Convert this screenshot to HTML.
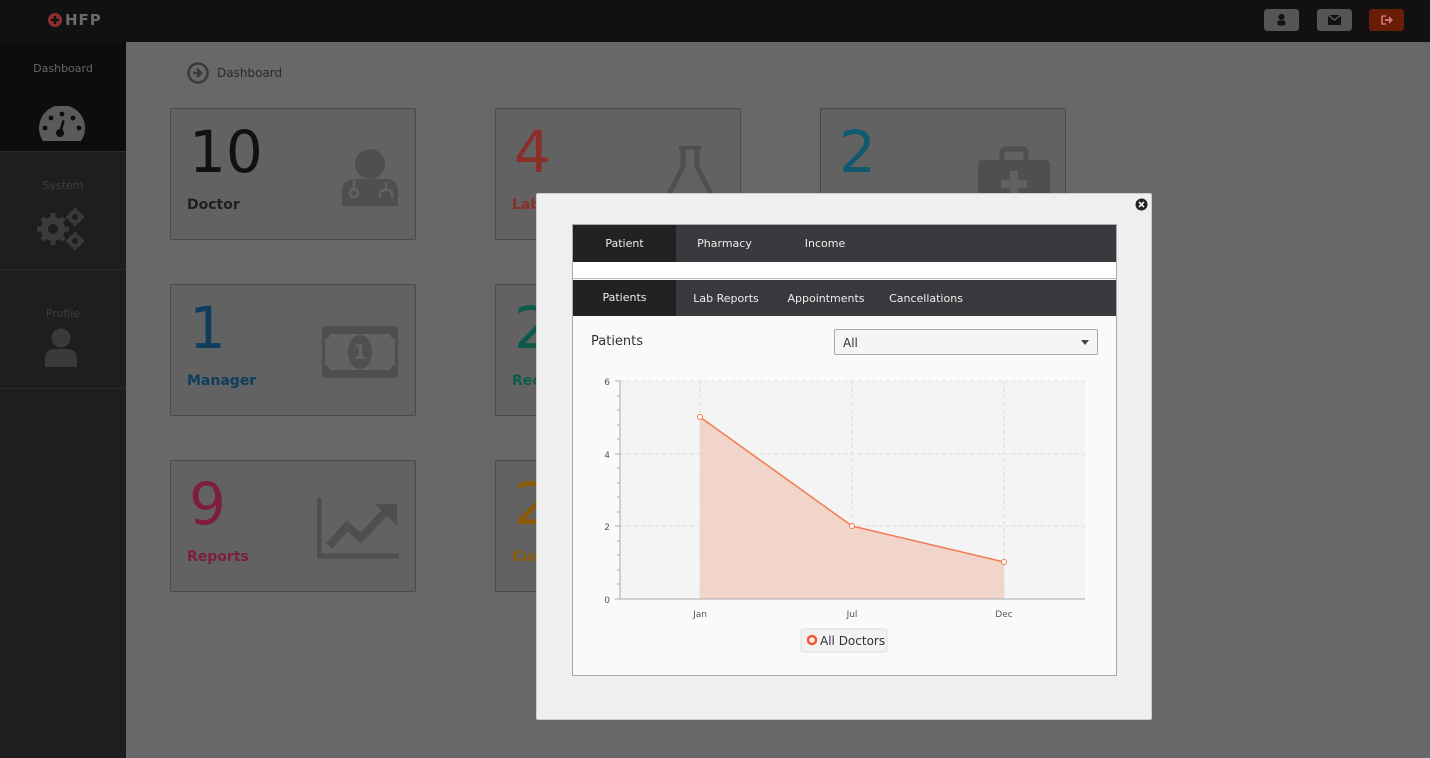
<!DOCTYPE html>
<html><head><meta charset="utf-8"><style>
*{margin:0;padding:0;box-sizing:border-box}
body{width:1430px;height:758px;overflow:hidden;background:#686868;font-family:"DejaVu Sans","Liberation Sans",sans-serif;position:relative}
.top{position:absolute;left:0;top:0;width:1430px;height:42px;background:#111}
.logo{position:absolute;left:48px;top:11px;color:#6a6a6a;font-weight:bold;font-size:15px;letter-spacing:1px}
.logo i{display:inline-block;width:14px;height:14px;border-radius:50%;background:#8a2e2e;vertical-align:-2px;margin-right:3px;position:relative}
.tb{position:absolute;top:9px;width:35px;height:22px;border-radius:3px;background:#555}
.side{position:absolute;left:0;top:42px;width:126px;height:716px;background:#1e1e1e}
.si{position:absolute;left:0;width:126px;text-align:center;font-size:11px;color:#3f3f3f;border-bottom:1px solid #2a2a2a}
.card{position:absolute;width:246px;height:132px;background:#626262;border:1px solid #4a4a4a;border-radius:2px}
.card .n{position:absolute;left:18px;top:8px;font-size:58px;line-height:70px}
.card .l{position:absolute;left:16px;top:88px;font-size:14px;font-weight:bold}
.card svg{position:absolute}
.modal{position:absolute;left:536px;top:193px;width:616px;height:527px;background:#efefef;border:1px solid #ccc;border-radius:2px}
.panel{position:absolute;left:572px;top:224px;width:545px;height:452px;background:#fafafa;border:1px solid #aaa}
.bar{position:absolute;left:0;width:543px;height:37px;background:#3a3a3e}
.tab{position:absolute;top:0;height:37px;line-height:37px;font-size:11px;color:#eee;text-align:center}
.tab.a{background:#222}
</style></head><body>
<div class="top">
 <div class="logo"><i><svg width="14" height="14" viewBox="0 0 14 14" style="position:absolute;left:0;top:0"><path d="M7 3v8M3 7h8" stroke="#111" stroke-width="2.5"/></svg></i>HFP</div>
 <div class="tb" style="left:1264px"><svg width="35" height="22"><circle cx="17.5" cy="8" r="3" fill="#111"/><rect x="13.5" y="11.5" width="8" height="5" rx="2" fill="#111"/></svg></div>
 <div class="tb" style="left:1317px"><svg width="35" height="22"><rect x="11" y="6" width="13" height="10" fill="#111"/><path d="M11 6l6.5 5 6.5-5" stroke="#555" stroke-width="1.5" fill="none"/></svg></div>
 <div class="tb" style="left:1369px;background:#6a1d06"><svg width="35" height="22"><path d="M13 7h4M13 7v8h4" stroke="#c77" stroke-width="1.6" fill="none"/><path d="M16 10h4v-3l4 4-4 4v-3h-4z" fill="#c77"/></svg></div>
</div>
<div class="side">
 <div class="si" style="top:0;height:110px;background:#0d0d0d;color:#666;padding-top:20px">Dashboard
  <svg width="46" height="36" viewBox="0 0 46 36" style="position:absolute;left:39px;top:64px"><path d="M4 35A23 23 0 1 1 42 35Z" fill="#5a5a5a"/><g fill="#0d0d0d"><circle cx="23" cy="8" r="2.4"/><circle cx="12" cy="12" r="2.4"/><circle cx="34" cy="12" r="2.4"/><circle cx="6" cy="22" r="2.4"/><circle cx="40" cy="22" r="2.4"/><circle cx="21" cy="27" r="4"/><path d="M19.5 27l4-13 2.2 0.8-3.5 13z"/></g></svg></div>
 <div class="si" style="top:110px;height:118px;padding-top:27px">System
  <svg width="50" height="44" viewBox="0 0 50 44" style="position:absolute;left:37px;top:56px"><g fill="#3a3a3a"><circle cx="16" cy="21" r="12"/><circle cx="38" cy="9" r="7"/><circle cx="38" cy="33" r="7"/></g><g stroke="#3a3a3a" stroke-width="5"><path d="M16 5v32M0 21h32M5 10l22 22M27 10L5 32"/></g><g stroke="#3a3a3a" stroke-width="3"><path d="M38 0v18M29 9h18M38 24v18M29 33h18"/></g><g fill="#1e1e1e"><circle cx="16" cy="21" r="5"/><circle cx="38" cy="9" r="3"/><circle cx="38" cy="33" r="3"/></g></svg></div>
 <div class="si" style="top:228px;height:119px;padding-top:37px">Profile
  <svg width="34" height="40" viewBox="0 0 34 40" style="position:absolute;left:44px;top:58px"><circle cx="17" cy="10" r="9.5" fill="#3a3a3a"/><path d="M1 39v-8q0-10 10-10h12q10 0 10 10v8z" fill="#3a3a3a"/></svg></div>
</div>
<svg width="22" height="22" style="position:absolute;left:187px;top:62px"><circle cx="11" cy="11" r="9.5" fill="none" stroke="#3a3a3a" stroke-width="2.5"/><path d="M6 11h7M10 7l4 4-4 4" stroke="#3a3a3a" stroke-width="2.5" fill="none"/></svg>
<div style="position:absolute;left:217px;top:66px;font-size:12px;color:#2a2a2a">Dashboard</div>

<div class="card" style="left:170px;top:108px"><div class="n" style="color:#111">10</div><div class="l" style="color:#1e1e1e">Doctor</div>
 <svg width="56" height="62" style="left:171px;top:37px"><circle cx="28" cy="18" r="15" fill="#4f4f4f"/><path d="M0 60v-14q0-13 13-13h30q13 0 13 13v14z" fill="#4f4f4f"/><circle cx="12" cy="47" r="4" fill="none" stroke="#626262" stroke-width="2.5"/><path d="M12 43v-9M44 44v-8M38 52v-4q0-4 6-4t6 4v4" stroke="#626262" stroke-width="2.5" fill="none"/></svg></div>
<div class="card" style="left:495px;top:108px"><div class="n" style="color:#8a2e28">4</div><div class="l" style="color:#8a2e28">Lab</div>
 <svg width="50" height="60" style="left:169px;top:37px"><path d="M14 1h22M18 1v20L2 52h46L32 21V1" fill="none" stroke="#4f4f4f" stroke-width="5"/></svg></div>
<div class="card" style="left:820px;top:108px"><div class="n" style="color:#0f5a6e">2</div>
 <svg width="72" height="60" style="left:157px;top:37px"><rect x="0" y="14" width="72" height="46" rx="4" fill="#4f4f4f"/><rect x="24" y="3" width="24" height="14" rx="3" fill="none" stroke="#4f4f4f" stroke-width="5"/><path d="M36 25v26M23 38h26" stroke="#626262" stroke-width="8"/></svg></div>

<div class="card" style="left:170px;top:284px"><div class="n" style="color:#0e3d5e">1</div><div class="l" style="color:#0e3d5e">Manager</div>
 <svg width="76" height="52" style="left:151px;top:41px"><rect width="76" height="52" rx="3" fill="#4f4f4f"/><path d="M8 8h60a5 5 0 0 0 5 5v26a5 5 0 0 0-5 5H8a5 5 0 0 0-5-5V13a5 5 0 0 0 5-5z" fill="#626262"/><ellipse cx="38" cy="26" rx="12" ry="17" fill="#4f4f4f"/><text x="38" y="33" font-size="20" font-weight="bold" text-anchor="middle" fill="#626262" font-family="DejaVu Sans">1</text></svg></div>
<div class="card" style="left:495px;top:284px"><div class="n" style="color:#0e5a4a">2</div><div class="l" style="color:#0e5a4a">Rec</div></div>

<div class="card" style="left:170px;top:460px"><div class="n" style="color:#7e1d40">9</div><div class="l" style="color:#7e1d40">Reports</div>
 <svg width="84" height="62" style="left:146px;top:37px"><path d="M2 0v58h80" stroke="#4f4f4f" stroke-width="5" fill="none"/><path d="M12 48l18-20 14 12 26-28" stroke="#4f4f4f" stroke-width="8" fill="none"/><path d="M58 6h22v22z" fill="#4f4f4f"/></svg></div>
<div class="card" style="left:495px;top:460px"><div class="n" style="color:#8a5a08">2</div><div class="l" style="color:#8a5a08">Cur</div></div>

<div class="modal"></div>
<svg width="13" height="13" style="position:absolute;left:1135px;top:198px"><circle cx="6.5" cy="6.5" r="6" fill="#222"/><path d="M4 4l5 5M9 4l-5 5" stroke="#eee" stroke-width="1.6"/></svg>
<div class="panel">
 <div class="bar" style="top:0"><div class="tab a" style="left:0;width:103px">Patient</div><div class="tab" style="left:103px;width:97px">Pharmacy</div><div class="tab" style="left:200px;width:104px">Income</div></div>
 <div style="position:absolute;left:0;top:37px;width:543px;height:17px;background:#fff;border-bottom:1px solid #bbb"></div>
 <div class="bar" style="top:55px;height:36px"><div class="tab a" style="left:0;width:103px;height:36px;line-height:36px">Patients</div><div class="tab" style="left:103px;width:100px;line-height:38px">Lab Reports</div><div class="tab" style="left:203px;width:100px;line-height:38px">Appointments</div><div class="tab" style="left:303px;width:100px;line-height:38px">Cancellations</div></div>
 <div style="position:absolute;left:18px;top:109px;font-size:13px;color:#333">Patients</div>
 <div style="position:absolute;left:261px;top:104px;width:264px;height:26px;background:#f5f5f5;border:1px solid #aaa;border-radius:2px;font-size:12px;color:#333;padding:6px 8px">All<svg width="8" height="5" style="position:absolute;right:8px;top:10px"><path d="M0 0h8L4 5z" fill="#444"/></svg></div>
</div>
<svg width="545" height="300" style="position:absolute;left:572px;top:370px" font-family="DejaVu Sans" font-size="9" fill="#555">
 <rect x="48" y="11" width="465" height="218" fill="#f4f4f4"/>
 <g stroke="#ddd" stroke-dasharray="4 3"><path d="M48 11h465M48 84h465M48 156h465M128 11v218M280 11v218M432 11v218"/></g>
 <path d="M128 47L280 156L432 192V229H128Z" fill="#f2d5ca"/>
 <path d="M128 47L280 156L432 192" stroke="#f37b50" stroke-width="1.5" fill="none"/>
 <g fill="#fff" stroke="#f37b50" stroke-width="1"><circle cx="128" cy="47" r="2.5"/><circle cx="280" cy="156" r="2.5"/><circle cx="432" cy="192" r="2.5"/></g>
 <path d="M48 11v218h465" stroke="#aaa" fill="none"/>
 <g stroke="#aaa"><path d="M43 11h5M43 84h5M43 156h5M43 229h5M45 26h3M45 40h3M45 55h3M45 69h3M45 98h3M45 113h3M45 127h3M45 142h3M45 171h3M45 185h3M45 200h3M45 214h3"/></g>
 <text x="38" y="15" text-anchor="end">6</text><text x="38" y="88" text-anchor="end">4</text><text x="38" y="160" text-anchor="end">2</text><text x="38" y="233" text-anchor="end">0</text>
 <text x="128" y="247" text-anchor="middle">Jan</text><text x="280" y="247" text-anchor="middle">Jul</text><text x="432" y="247" text-anchor="middle">Dec</text>
 <rect x="229" y="259" width="86" height="23" rx="2" fill="#f2f2f2" stroke="#ddd"/>
 <circle cx="240" cy="270" r="4" fill="none" stroke="#f05a28" stroke-width="2.5"/>
 <text x="248" y="275" font-size="12" fill="#333">All Doctors</text>
</svg>
</body></html>
